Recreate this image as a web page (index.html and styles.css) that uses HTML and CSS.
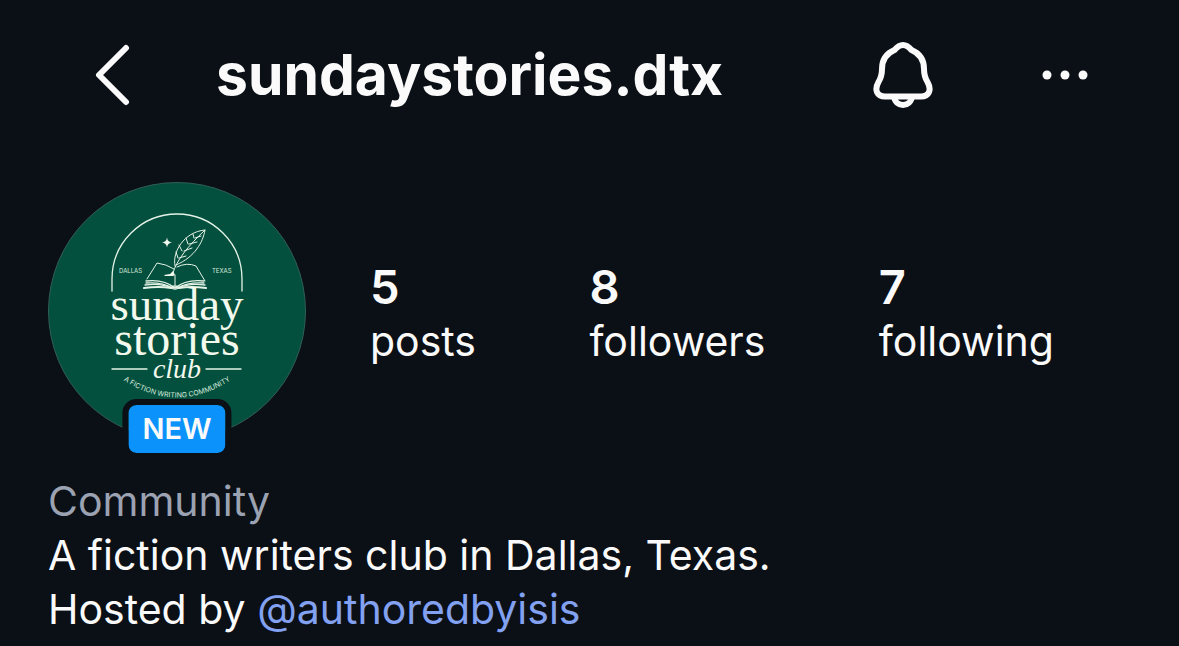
FILE: index.html
```html
<!DOCTYPE html>
<html lang="en">
<head>
<meta charset="utf-8">
<meta name="viewport" content="width=device-width, initial-scale=1">
<title>sundaystories.dtx</title>
<link rel="stylesheet" href="styles.css">
</head>
<body>
<header class="topbar">
  <button class="icon-button" type="button" aria-label="Back">
    <svg width="36" height="62" viewBox="0 0 36 62"><path d="M32 4 5 31 32 58" fill="none" stroke="currentColor" stroke-width="6" stroke-linecap="round" stroke-linejoin="round"/></svg>
  </button>
  <h1 class="username">sundaystories.dtx</h1>
  <div class="actions">
    <button class="icon-button" type="button" aria-label="Notifications">
      <svg width="60" height="68" viewBox="0 0 60 68" fill="none" stroke="currentColor" stroke-width="6" stroke-linejoin="round">
        <path d="M30 4C26 4 24 6 21.500 9C12 13 9 20 9 28C9 34 8 37 5.500 41C1 49 4 55.500 12 55.500H48C56 55.500 59 49 54.500 41C52 37 51 34 51 28C51 20 48 13 38.500 9C36 6 34 4 30 4Z"/>
        <path d="M21 55C22 67 38 67 39 55"/>
      </svg>
    </button>
    <button class="icon-button" type="button" aria-label="More options">
      <svg width="46" height="10" viewBox="0 0 46 10" fill="currentColor"><circle cx="5" cy="5" r="4.500"/><circle cx="23" cy="5" r="4.500"/><circle cx="41" cy="5" r="4.500"/></svg>
    </button>
  </div>
</header>
<main class="profile">
  <section class="summary">
    <div class="avatar">
      <svg class="avatar-image" viewBox="0 0 258 258" role="img" aria-label="Sunday Stories Club">
        <circle cx="129" cy="129" r="128.500" fill="#04503f" stroke="#315f57"/>
        <g fill="none" stroke="#e4f3e6" stroke-width="1.300" stroke-linecap="round" stroke-linejoin="round">
          <path d="M64 109V97a65 65 0 0 1 130 0v12"/>
          <path d="M64 187H99M158 187H193"/>
          <path stroke-width="1" d="M99 97 109 81Q118 82 126 87M129 85Q139 80 148 84L157 99M127 93V103"/>
          <path d="M98 99Q116 97 127 106Q138 97 156 99M98 101Q114 100 125 106M156 101Q140 100 129 106"/>
          <path d="M97 103Q113 101 124 106M157 103Q141 101 130 106"/>
          <path stroke-width="2" d="M96 106Q111 104 123 106M131 106Q143 104 158 106"/>
          <ellipse cx="127" cy="105.500" rx="3" ry="1.500"/>
          <path stroke-width="1" d="M125 91C128 79 140 64 157 48M127 84C124 70 136 50 157 48C155 60 147 75 128 83M130 76 128 70M134 69 131 63M140 62 138 56M146 56 145 52M131 76 138 74M136 69 144 66M141 62 149 60M147 56 153 54"/>
        </g>
        <path fill="#f3faed" d="M119 55.500Q119.500 60 124 60.500Q119.500 61 119 65.500Q118.500 61 114 60.500Q118.500 60 119 55.500ZM116 93 122 92 125 89 127 93 125 94H117Z"/>
        <g class="mark-place"><text x="71" y="91">DALLAS</text><text x="164" y="91">TEXAS</text></g>
        <text class="mark-sunday" x="129" y="138">sunday</text>
        <text class="mark-stories" x="129" y="173">stories</text>
        <text class="mark-club" x="129" y="196">club</text>
        <path id="tagline-curve" d="M68 193Q129 238 190 193" fill="none"/>
        <text class="mark-tagline"><textPath href="#tagline-curve" startOffset="50%">A FICTION WRITING COMMUNITY</textPath></text>
      </svg>
      <span class="badge">NEW</span>
    </div>
    <ul class="stats">
      <li><a class="stat" href="#posts"><strong class="count">5</strong><span>posts</span></a></li>
      <li><a class="stat" href="#followers"><strong class="count">8</strong><span>followers</span></a></li>
      <li><a class="stat" href="#following"><strong class="count">7</strong><span>following</span></a></li>
    </ul>
  </section>
  <section class="bio">
    <p class="category">Community</p>
    <p>A fiction writers club in Dallas, Texas.</p>
    <p>Hosted by <a class="mention" href="#authoredbyisis">@authoredbyisis</a></p>
  </section>
</main>
</body>
</html>
```
FILE: styles.css
```css
* { box-sizing: border-box; }

body {
  margin: 0;
  background: #0b0f16;
  color: #fafafa;
  font-family: Inter, "Liberation Sans", sans-serif;
  font-size: 41px;
  line-height: 54px;
}

p, h1, ul { margin: 0; padding: 0; }
a { color: inherit; text-decoration: none; }

.topbar {
  display: flex;
  align-items: center;
  padding: 40px 91px 0 94px;
}

.icon-button {
  display: flex;
  padding: 0;
  border: 0;
  background: none;
  color: inherit;
}

.username {
  margin-left: 86px;
  font-size: 57px;
  font-weight: 700;
  line-height: 70px;
}

.actions {
  display: flex;
  align-items: center;
  gap: 109px;
  margin-left: auto;
}

.profile { padding: 72px 48px 0; }

.summary {
  display: flex;
  align-items: center;
}

.avatar {
  position: relative;
  flex: none;
  width: 258px;
}

.avatar-image { display: block; width: 100%; }

.badge {
  position: absolute;
  bottom: -19px;
  left: 50%;
  transform: translateX(-50%);
  padding: 0 14px;
  border: 6px solid #0b0f16;
  border-radius: 14px;
  background: #0b93fb;
  background-clip: padding-box;
  font-size: 29px;
  font-weight: 600;
  line-height: 48px;
}

.stats {
  display: flex;
  flex: 1;
  justify-content: space-between;
  margin: 0 77px 0 64px;
  padding-top: 6px;
  list-style: none;
}

.stat { display: flex; flex-direction: column; }

.count {
  font-size: 47px;
  font-weight: 600;
}

.bio { padding-top: 34px; }
.category { color: #9ba2b1; }
.mention { color: #82a1f0; }

.mark-sunday, .mark-stories, .mark-club {
  fill: #f3faed;
  font-family: "Liberation Serif", serif;
  text-anchor: middle;
}

.mark-sunday { font-size: 47px; }
.mark-stories { font-size: 48px; }
.mark-club { font-size: 28px; font-style: italic; }

.mark-place, .mark-tagline {
  fill: #d6eadb;
  font-family: Inter, sans-serif;
  font-size: 6px;
}

.mark-tagline { font-size: 7px; text-anchor: middle; }
```
